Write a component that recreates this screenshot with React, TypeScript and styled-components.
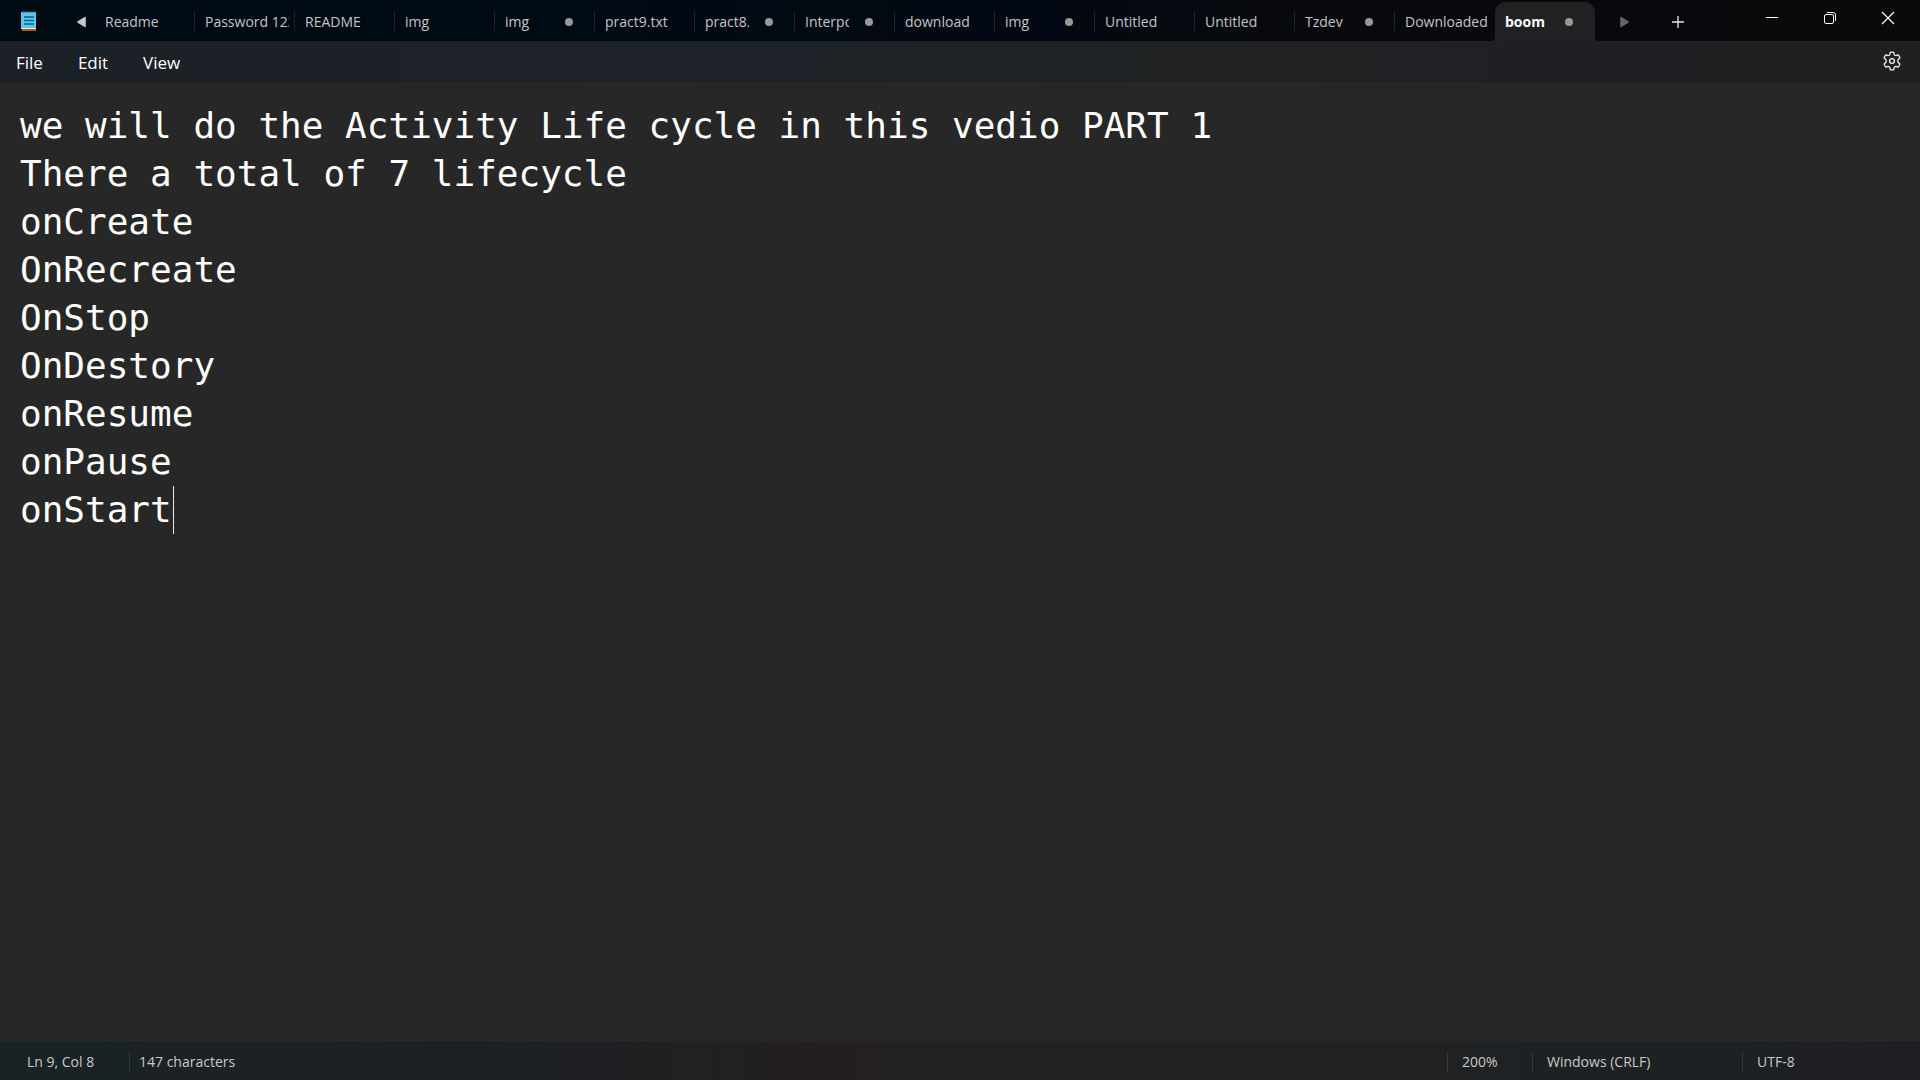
import React, { useState } from "react";
import styled, { createGlobalStyle } from "styled-components";

const GlobalStyle = createGlobalStyle`
  *, *::before, *::after { box-sizing: border-box; }
  html, body, #root { height: 100%; margin: 0; }
  body {
    background: #272727;
    color: #fff;
    font-family: "Open Sans", "Noto Sans", sans-serif;
    overflow: hidden;
  }
  button { font: inherit; color: inherit; background: none; border: 0; padding: 0; }
`;

const Window = styled.div`
  display: flex;
  flex-direction: column;
  height: 100vh;
`;

const TitleBar = styled.header`
  display: flex;
  align-items: flex-end;
  height: 41px;
  background: linear-gradient(90deg, #000a12 0%, #000a12 30%, #020811 55%, #08090c 68%, #08090d 85%, #0a0a0a 100%);
`;

const AppIcon = styled.div`
  width: 68px;
  padding: 0 0 10px 21px;
  line-height: 0;
`;

const ScrollButton = styled.button<{ $dim?: boolean; $width: number }>`
  display: flex;
  align-items: center;
  justify-content: center;
  width: ${(p) => p.$width}px;
  height: 39px;
  color: ${(p) => (p.$dim ? "#646569" : "#c6c8ca")};
`;

const TabList = styled.div`
  display: flex;
  align-items: flex-end;
  margin-left: 1px;
`;

const TabButton = styled.button<{ $active: boolean; $divider: boolean }>`
  position: relative;
  display: flex;
  align-items: center;
  justify-content: space-between;
  width: 100px;
  height: 39px;
  padding: 0 6px 0 10px;
  font-size: 14px;
  line-height: 20px;
  text-align: left;
  color: ${(p) => (p.$active ? "#fff" : "#c3c6c8")};
  font-weight: ${(p) => (p.$active ? 700 : 400)};
  background: ${(p) => (p.$active ? "#202122" : "transparent")};
  border-radius: 10px 10px 0 0;

  &::before {
    content: "";
    display: ${(p) => (p.$active ? "block" : "none")};
    position: absolute;
    left: -4px;
    right: -4px;
    bottom: 0;
    height: 4px;
    background:
      radial-gradient(circle at 0 0, transparent 4px, #202122 4px) left / 4px 4px no-repeat,
      radial-gradient(circle at 100% 0, transparent 4px, #202122 4px) right / 4px 4px no-repeat;
  }

  &::after {
    content: "";
    display: ${(p) => (p.$divider ? "block" : "none")};
    position: absolute;
    right: 0;
    top: 9px;
    width: 1px;
    height: 20px;
    background: #1d242a;
  }
`;

const TabTitle = styled.span`
  flex: 1;
  min-width: 0;
  overflow: hidden;
  white-space: nowrap;
`;

const UnsavedDot = styled.span`
  width: 8px;
  height: 8px;
  margin: 0 16px 0 16px;
  border-radius: 50%;
  background: #96989a;
`;

const AddButton = styled.button`
  display: flex;
  align-items: center;
  justify-content: center;
  width: 50px;
  height: 39px;
`;

const WindowControls = styled.div`
  display: flex;
  align-self: flex-start;
  margin-left: auto;
  margin-right: 3px;
`;

const ControlButton = styled.button`
  display: flex;
  align-items: center;
  justify-content: center;
  width: 58px;
  height: 36px;
`;

const MenuBar = styled.nav`
  display: flex;
  align-items: center;
  height: 41px;
  padding: 0 16px;
  gap: 35px;
  background: linear-gradient(90deg, #1b2126 0%, #1d2128 35%, #1d2225 50%, #202122 65%, #1e2024 80%, #202020 100%);
`;

const MenuButton = styled.button`
  padding-top: 2px;
  font-size: 17px;
  line-height: 24px;
`;

const SettingsButton = styled.button`
  margin-left: auto;
  margin-right: 2px;
  padding-bottom: 2px;
  line-height: 0;
`;

const EditorArea = styled.main`
  position: relative;
  flex: 1;
  min-height: 0;
  background: #272727;
  font-family: "DejaVu Sans Mono", "Liberation Mono", monospace;
  font-size: 36px;
  line-height: 48px;
`;

const TextArea = styled.textarea`
  display: block;
  width: 100%;
  height: 100%;
  padding: 20px 20px 0;
  border: 0;
  outline: 0;
  resize: none;
  overflow: hidden;
  background: transparent;
  color: #fff;
  font: inherit;
  white-space: pre;
`;

const Caret = styled.span`
  position: absolute;
  width: 1px;
  height: 48px;
  background: #e8e8e8;
  pointer-events: none;
`;

const StatusBar = styled.footer`
  display: flex;
  align-items: center;
  height: 39px;
  padding: 2px 0 0 27px;
  font-size: 14px;
  line-height: 20px;
  color: #c8caca;
  background: linear-gradient(90deg, #1a2225 0%, #1c2024 25%, #231f20 42%, #202122 70%, #1d2124 85%, #1e1f23 100%);
`;

const StatusCell = styled.span<{ $width: number; $divided?: boolean; $inset?: number }>`
  width: ${(p) => p.$width}px;
  padding-left: ${(p) => p.$inset ?? 0}px;
  border-left: ${(p) => (p.$divided ? "1px solid #33373a" : "0")};
  white-space: nowrap;
`;

const StatusSpacer = styled.span`
  flex: 1;
`;

type Tab = { title: string; unsaved?: boolean };

const tabs: Tab[] = [
  { title: "Readme" },
  { title: "Password 123" },
  { title: "README" },
  { title: "img" },
  { title: "img", unsaved: true },
  { title: "pract9.txt" },
  { title: "pract8.txt", unsaved: true },
  { title: "Interpolation", unsaved: true },
  { title: "download" },
  { title: "img", unsaved: true },
  { title: "Untitled" },
  { title: "Untitled" },
  { title: "Tzdev", unsaved: true },
  { title: "Downloaded" },
  { title: "boom", unsaved: true },
];

const initialText = [
  "we will do the Activity Life cycle in this vedio PART 1",
  "There a total of 7 lifecycle",
  "onCreate",
  "OnRecreate",
  "OnStop",
  "OnDestory",
  "onResume",
  "onPause",
  "onStart",
].join("\n");

const NotepadIcon = () => (
  <svg width="15" height="20" viewBox="0 0 15 20" aria-hidden="true">
    <rect x="1" y="16" width="14" height="4" fill="#b45a12" />
    <rect y="17" width="15" height="1" fill="#f3e7dc" />
    <rect y="1" width="15" height="16" fill="#5cc6ea" />
    <path d="M2.5 0v2M5.5 0v2M9.5 0v2M12.5 0v2" stroke="#14708f" strokeWidth="1.4" />
    <path d="M3 6h10M3 9.5h10M3 13h10" stroke="#0d6486" strokeWidth="1.6" />
  </svg>
);

const TriangleIcon = ({ flip }: { flip?: boolean }) => (
  <svg width="9" height="12" viewBox="0 0 9 12" aria-hidden="true">
    <path
      d={flip ? "M1 1.6v8.8L8 6z" : "M8 1.6v8.8L1 6z"}
      fill="currentColor"
      stroke="currentColor"
      strokeWidth="1.6"
      strokeLinejoin="round"
    />
  </svg>
);

const GearIcon = () => (
  <svg width="20" height="20" viewBox="0 0 20 20" fill="none" stroke="#f0f0f0" strokeWidth="1.3" strokeLinejoin="round" aria-hidden="true">
    <path d="M8.2 1.4Q10 .9 11.8 1.4L12.2 3.6Q12.5 4.5 13.9 4.6L16 3.8Q17.3 5.1 17.9 6.9L16.2 8.4Q15.2 10 16.2 11.6L17.9 13.1Q17.3 14.9 16 16.2L13.9 15.4Q12.5 15.5 12.2 16.4L11.8 18.6Q10 19.1 8.2 18.6L7.8 16.4Q7.5 15.5 6.1 15.4L4 16.2Q2.7 14.9 2.1 13.1L3.8 11.6Q4.8 10 3.8 8.4L2.1 6.9Q2.7 5.1 4 3.8L6.1 4.6Q7.5 4.5 7.8 3.6Z" />
    <circle cx="10" cy="10" r="2.4" />
  </svg>
);

export default function App() {
  const [text, setText] = useState(initialText);
  const [active, setActive] = useState(tabs.length - 1);
  const lines = text.split("\n");
  const row = lines.length - 1;
  const column = lines[row].length;

  return (
    <Window>
      <GlobalStyle />
      <TitleBar>
        <AppIcon>
          <NotepadIcon />
        </AppIcon>
        <ScrollButton $width={26} aria-label="Scroll tabs left">
          <TriangleIcon />
        </ScrollButton>
        <TabList role="tablist">
          {tabs.map((tab, i) => (
            <TabButton
              key={i}
              role="tab"
              aria-selected={i === active}
              $active={i === active}
              $divider={i !== active && i !== active - 1}
              onClick={() => setActive(i)}
            >
              <TabTitle>{tab.title}</TabTitle>
              {tab.unsaved && <UnsavedDot />}
            </TabButton>
          ))}
        </TabList>
        <ScrollButton $width={58} $dim aria-label="Scroll tabs right">
          <TriangleIcon flip />
        </ScrollButton>
        <AddButton aria-label="New tab">
          <svg width="14" height="14" viewBox="0 0 14 14" stroke="#e6e6e6" aria-hidden="true">
            <path d="M7 1v12M1 7h12" strokeWidth="1.3" />
          </svg>
        </AddButton>
        <WindowControls>
          <ControlButton aria-label="Minimize">
            <svg width="14" height="14" viewBox="0 0 14 14" stroke="#fff" aria-hidden="true">
              <path d="M1 6.5h12" />
            </svg>
          </ControlButton>
          <ControlButton aria-label="Restore">
            <svg width="14" height="14" viewBox="0 0 14 14" fill="none" stroke="#fff" aria-hidden="true">
              <rect x="1.5" y="3.5" width="9" height="9" rx="1.5" />
              <path d="M4 1.5h6a2.5 2.5 0 0 1 2.5 2.5v6" />
            </svg>
          </ControlButton>
          <ControlButton aria-label="Close">
            <svg width="14" height="14" viewBox="0 0 14 14" stroke="#fff" aria-hidden="true">
              <path d="M1 1l12 12M13 1L1 13" strokeWidth="1.2" />
            </svg>
          </ControlButton>
        </WindowControls>
      </TitleBar>
      <MenuBar aria-label="Menu">
        <MenuButton>File</MenuButton>
        <MenuButton>Edit</MenuButton>
        <MenuButton>View</MenuButton>
        <SettingsButton aria-label="Settings">
          <GearIcon />
        </SettingsButton>
      </MenuBar>
      <EditorArea>
        <TextArea
          aria-label="Text editor"
          spellCheck={false}
          value={text}
          onChange={(e) => setText(e.target.value)}
        />
        <Caret style={{ left: `calc(21px + ${column}ch)`, top: `${20 + row * 48}px` }} />
      </EditorArea>
      <StatusBar>
        <StatusCell $width={102}>{`Ln ${row + 1}, Col ${column + 1}`}</StatusCell>
        <StatusCell $width={200} $divided $inset={9}>147 characters</StatusCell>
        <StatusSpacer />
        <StatusCell $width={85} $divided $inset={14}>200%</StatusCell>
        <StatusCell $width={210} $divided $inset={14}>Windows (CRLF)</StatusCell>
        <StatusCell $width={178} $divided $inset={14}>UTF-8</StatusCell>
      </StatusBar>
    </Window>
  );
}
